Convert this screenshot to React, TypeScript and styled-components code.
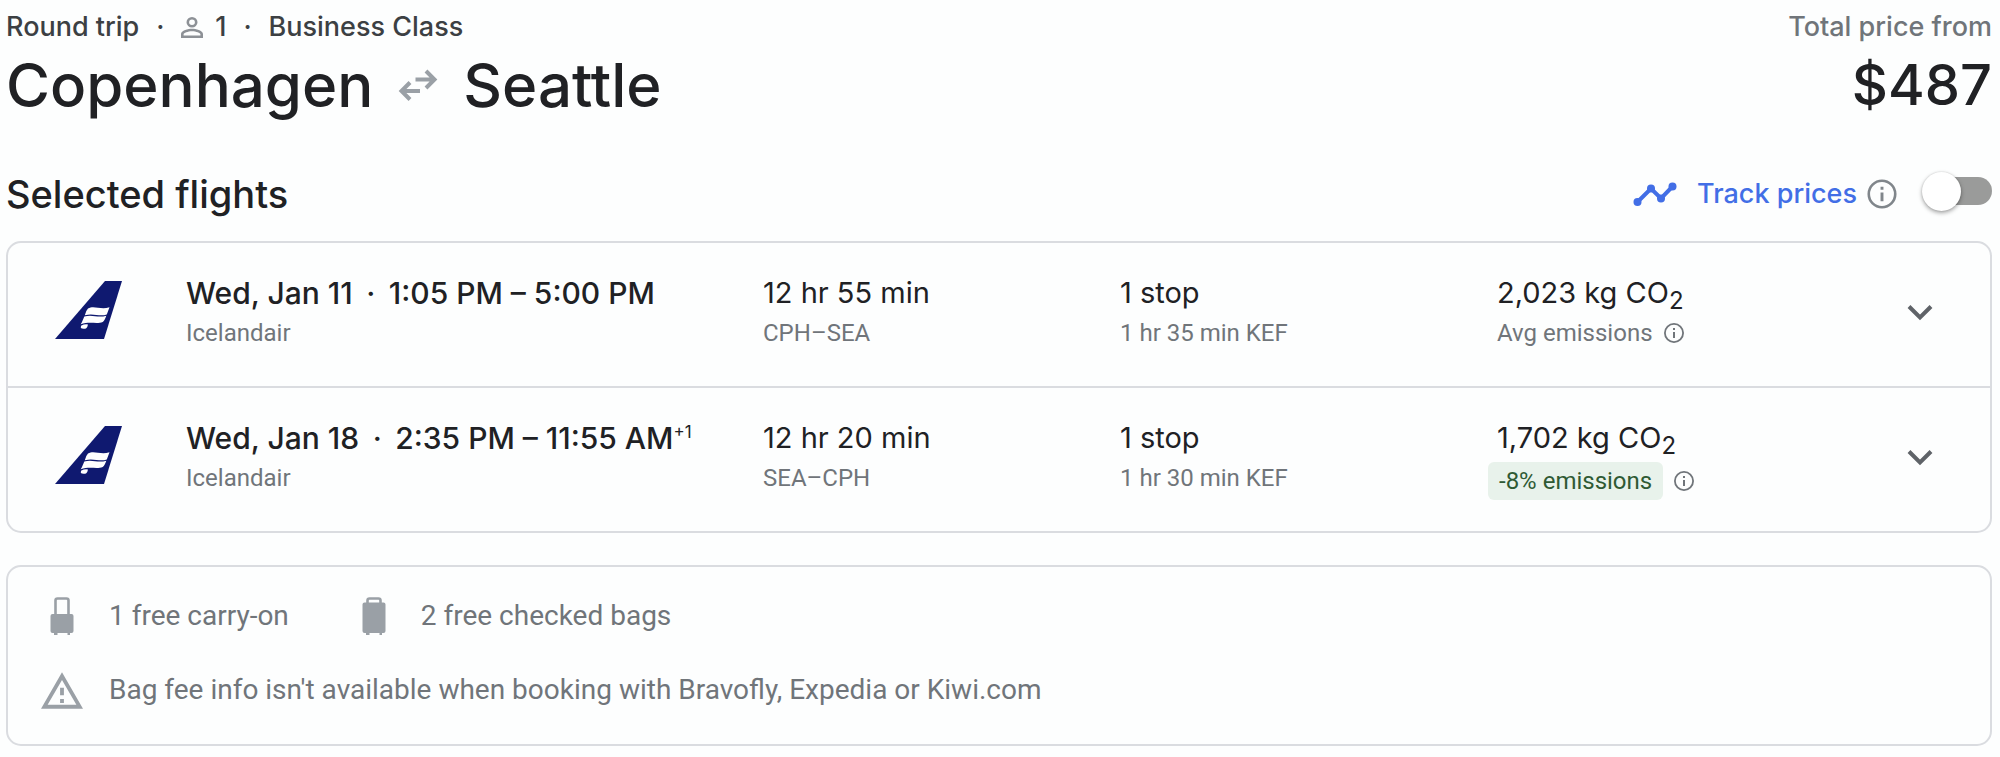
import React, { useState } from 'react';
import styled, { createGlobalStyle } from 'styled-components';

const display = '"Google Sans", Inter, "Liberation Sans", sans-serif';
const body = 'Roboto, "Liberation Sans", sans-serif';

const color = {
  ink: '#202124',
  strong: '#3c4043',
  muted: '#70757a',
  icon: '#9aa0a6',
  line: '#dadce0',
  link: '#426ee6',
  tail: '#0f1970',
};

const GlobalStyle = createGlobalStyle`
  * { box-sizing: border-box; }
  body { margin: 0; background: #fdfefe; color: ${color.ink}; font-family: ${body}; }
  h1, h2, p, ul { margin: 0; padding: 0; font-weight: inherit; }
  button { border: 0; padding: 0; background: none; font: inherit; color: inherit; cursor: pointer; }
`;

const Page = styled.main`
  padding: 11px 8px 8px 6px;
`;

const Header = styled.header`
  display: flex;
  justify-content: space-between;
`;

const HeaderColumn = styled.div<{ $end?: boolean }>`
  display: flex;
  flex-direction: column;
  align-items: ${(p) => (p.$end ? 'flex-end' : 'flex-start')};
  gap: 6px;
`;

const Meta = styled.p<{ $muted?: boolean }>`
  display: flex;
  align-items: center;
  font: 500 27px/32px ${display};
  color: ${(p) => (p.$muted ? color.muted : color.strong)};
`;

const Dot = styled.span`
  width: 36px;
  text-align: center;
`;

const MetaDot = styled(Dot)`
  width: 42px;
`;

const Travelers = styled.span`
  display: flex;
  align-items: center;
  gap: 12px;
`;

const Route = styled.h1`
  display: flex;
  align-items: center;
  gap: 25px;
  font: 500 60px/72px ${display};
`;

const Price = styled.p`
  font: 500 56px/72px ${display};
`;

const SectionBar = styled.div`
  display: flex;
  align-items: center;
  justify-content: space-between;
  margin: 49px 0 23px;
`;

const SectionTitle = styled.h2`
  font: 500 38px/48px ${display};
`;

const TrackGroup = styled.div`
  display: flex;
  align-items: center;
`;

const TrackLabel = styled.label`
  display: flex;
  align-items: center;
  gap: 20px;
  margin-right: 9px;
  font: 500 27px/32px ${display};
  color: ${color.link};
  cursor: pointer;
`;

const IconButton = styled.button`
  display: flex;
  align-items: center;
  justify-content: center;
`;

const Switch = styled.input`
  appearance: none;
  display: flex;
  align-items: center;
  width: 70px;
  height: 28px;
  margin: 0 0 6px 24px;
  border-radius: 14px;
  background: linear-gradient(#9a9b9a, #9a9b9a) right / 56px 28px no-repeat;
  cursor: pointer;

  &::before {
    content: '';
    width: 39px;
    height: 39px;
    flex: none;
    border-radius: 50%;
    background: #fff;
    box-shadow: 0 2px 4px rgba(0, 0, 0, 0.35), 0 0 2px rgba(0, 0, 0, 0.15);
  }

  &:checked {
    justify-content: flex-end;
  }
`;

const Card = styled.section`
  border: 2px solid ${color.line};
  border-radius: 15px;
`;

const FlightRow = styled.article`
  display: grid;
  grid-template-columns: 131px 577fr 357fr 377fr 410fr 26px;
  padding: 32px 57px 28px 47px;
  min-height: 143px;

  & + & {
    border-top: 2px solid ${color.line};
    min-height: 145px;
  }
`;

const TailCell = styled.div`
  padding-top: 6px;
`;

const Cell = styled.div`
  display: flex;
  flex-direction: column;
  gap: 6px;
  white-space: nowrap;
`;

const Primary = styled.p<{ $bold?: boolean }>`
  display: flex;
  font: ${(p) => (p.$bold ? '500 30px' : '400 29px')} / 36px ${display};
`;

const Superscript = styled.sup`
  font-size: 17px;
  line-height: 24px;
  font-weight: 400;
`;

const Subscript = styled.sub`
  font-size: 24px;
  line-height: 36px;
  padding-top: 8px;
  height: 36px;
`;

const Secondary = styled.p`
  display: flex;
  align-items: center;
  gap: 10px;
  font: 400 24px/32px ${body};
  color: ${color.muted};
`;

const Badge = styled.span`
  margin-left: -9px;
  padding: 0 11px;
  border-radius: 6px;
  background: #e8f2eb;
  color: #2f5a34;
  line-height: 38px;
`;

const ChevronCell = styled(IconButton)`
  align-self: start;
  height: 75px;
`;

const BagCard = styled(Card)`
  display: flex;
  flex-direction: column;
  gap: 34px;
  margin-top: 32px;
  padding: 29px 33px 34px;
`;

const BagLine = styled.ul`
  display: flex;
  gap: 64px;
  list-style: none;
`;

const BagItem = styled.li`
  display: flex;
  align-items: center;
  gap: 26px;
  font: 400 28px/40px ${body};
  color: ${color.muted};
`;

const Svg = styled.svg`
  display: block;
  flex: none;
`;

function PersonIcon() {
  return (
    <Svg width="22" height="21" viewBox="4 4 16 16" fill="#8d9196" preserveAspectRatio="none" aria-hidden>
      <path d="M12 5.9a2.1 2.1 0 1 1 0 4.2 2.1 2.1 0 0 1 0-4.2m0 9c2.97 0 6.1 1.46 6.1 2.1v1.1H5.9V17c0-.64 3.13-2.1 6.1-2.1M12 4a4 4 0 1 0 0 8 4 4 0 0 0 0-8zm0 9c-2.67 0-8 1.34-8 4v3h16v-3c0-2.66-5.33-4-8-4z" />
    </Svg>
  );
}

function RoundTripIcon() {
  return (
    <Svg width="40" height="32" viewBox="0 0 40 32" fill="none" stroke={color.icon} strokeWidth="4" aria-hidden>
      <path d="M17.500 10.500H36M28 2l8.500 8.500L28 19M22 22H4M12 13.500 3.500 22l8.500 8.500" />
    </Svg>
  );
}

function TrendIcon() {
  return (
    <Svg width="44" height="26" viewBox="0 0 44 26" aria-hidden>
      <path d="M4.500 21 18 7.500 28 17.500 39.500 5.500" fill="none" stroke={color.link} strokeWidth="4" />
      <g fill={color.link}>
        <circle cx="4.500" cy="21" r="4" />
        <circle cx="18" cy="7.500" r="4" />
        <circle cx="28" cy="17.500" r="4" />
        <circle cx="39.500" cy="5.500" r="4" />
      </g>
    </Svg>
  );
}

function InfoIcon({ size, tone }: { size: number; tone: string }) {
  return (
    <Svg width={size} height={size} viewBox="1 1 22 22" fill={tone} aria-hidden>
      <path d="M11 7h2v2h-2zm0 4h2v6h-2zm1-9a10 10 0 1 0 0 20 10 10 0 0 0 0-20zm0 18.200a8.200 8.200 0 1 1 0-16.400 8.200 8.200 0 0 1 0 16.400z" />
    </Svg>
  );
}

function ChevronIcon() {
  return (
    <Svg width="26" height="17" viewBox="0 0 26 17" fill="none" stroke="#5f6368" strokeWidth="4" aria-hidden>
      <path d="M2 2.500 13 13.500 24 2.500" />
    </Svg>
  );
}

function TailLogo() {
  return (
    <Svg width="67" height="58" viewBox="0 0 67 58" role="img" aria-label="Icelandair">
      <path d="M50 0H67L49 58H0z" fill={color.tail} />
      <path
        d="M33 27.500c6-3.500 12 1.500 21.500-1.200l-2.700 7.200c-7 2.500-13-1.500-22 .8q1-4.500 3.200-6.800zM29.300 35.500c8-2.500 13.500 1.800 22-.8-1 3-2 5-3.600 6.300-6 2.500-13-1-22 2.300 1.300-2 2.300-4.600 3.600-7.800zM26 44.700q3.500-1.800 7-1.200-.5 3-2 4-3.500.8-5.200-.5z"
        fill="#fff"
      />
    </Svg>
  );
}

function CarryOnIcon() {
  return (
    <Svg width="42" height="40" viewBox="0 0 42 40" aria-hidden>
      <path d="M14.500 19V4.500q0-2 2-2h9q2 0 2 2V19" fill="none" stroke={color.icon} strokeWidth="2.600" />
      <path d="M11.500 18h19q2 0 2 2v15q0 2-2 2h-1.500v2h-2.500v-2h-10v2H13v-2h-1.500q-2 0-2-2V20q0-2 2-2z" fill={color.icon} />
    </Svg>
  );
}

function CheckedBagIcon() {
  return (
    <Svg width="42" height="40" viewBox="0 0 42 40" aria-hidden>
      <path d="M14.500 8V4.500q0-2 2-2h9q2 0 2 2V8" fill="none" stroke={color.icon} strokeWidth="2.600" />
      <path d="M11.500 6.500h19q2 0 2 2V35q0 2-2 2h-1.500v2h-2.500v-2h-10v2H13v-2h-1.500q-2 0-2-2V8.500q0-2 2-2z" fill={color.icon} />
    </Svg>
  );
}

function WarningIcon() {
  return (
    <Svg width="42" height="37" viewBox="1 2 22 19" fill={color.icon} aria-hidden>
      <path d="M12 5.990 19.530 19H4.470L12 5.990M12 2 1 21h22L12 2zm1 14h-2v2h2v-2zm0-6h-2v4h2v-4z" />
    </Svg>
  );
}

type Flight = {
  date: string;
  time: string;
  nextDay?: string;
  duration: string;
  airports: string;
  layover: string;
  co2: string;
  emissions: string;
  lower?: boolean;
};

const flights: Flight[] = [
  {
    date: 'Wed, Jan 11',
    time: '1:05 PM – 5:00 PM',
    duration: '12 hr 55 min',
    airports: 'CPH–SEA',
    layover: '1 hr 35 min KEF',
    co2: '2,023 kg CO',
    emissions: 'Avg emissions',
  },
  {
    date: 'Wed, Jan 18',
    time: '2:35 PM – 11:55 AM',
    nextDay: '+1',
    duration: '12 hr 20 min',
    airports: 'SEA–CPH',
    layover: '1 hr 30 min KEF',
    co2: '1,702 kg CO',
    emissions: '-8% emissions',
    lower: true,
  },
];

function FlightItem({ flight }: { flight: Flight }) {
  return (
    <FlightRow>
      <TailCell>
        <TailLogo />
      </TailCell>
      <Cell>
        <Primary $bold>
          {flight.date}
          <Dot>·</Dot>
          {flight.time}
          {flight.nextDay && <Superscript>{flight.nextDay}</Superscript>}
        </Primary>
        <Secondary>Icelandair</Secondary>
      </Cell>
      <Cell>
        <Primary>{flight.duration}</Primary>
        <Secondary>{flight.airports}</Secondary>
      </Cell>
      <Cell>
        <Primary>1 stop</Primary>
        <Secondary>{flight.layover}</Secondary>
      </Cell>
      <Cell>
        <Primary>
          {flight.co2}
          <Subscript>2</Subscript>
        </Primary>
        <Secondary>
          {flight.lower ? <Badge>{flight.emissions}</Badge> : flight.emissions}
          <IconButton aria-label="About emissions">
            <InfoIcon size={22} tone="#70757a" />
          </IconButton>
        </Secondary>
      </Cell>
      <ChevronCell aria-label="Show flight details">
        <ChevronIcon />
      </ChevronCell>
    </FlightRow>
  );
}

export default function App() {
  const [tracking, setTracking] = useState(false);
  return (
    <Page>
      <GlobalStyle />
      <Header>
        <HeaderColumn>
          <Meta>
            Round trip
            <MetaDot>·</MetaDot>
            <Travelers>
              <PersonIcon />1
            </Travelers>
            <MetaDot>·</MetaDot>
            Business Class
          </Meta>
          <Route>
            Copenhagen
            <RoundTripIcon />
            Seattle
          </Route>
        </HeaderColumn>
        <HeaderColumn $end>
          <Meta $muted>Total price from</Meta>
          <Price>$487</Price>
        </HeaderColumn>
      </Header>

      <SectionBar>
        <SectionTitle>Selected flights</SectionTitle>
        <TrackGroup>
          <TrackLabel htmlFor="track-prices">
            <TrendIcon />
            Track prices
          </TrackLabel>
          <IconButton aria-label="About price tracking">
            <InfoIcon size={32} tone="#80868b" />
          </IconButton>
          <Switch
            id="track-prices"
            type="checkbox"
            role="switch"
            checked={tracking}
            onChange={(e) => setTracking(e.target.checked)}
          />
        </TrackGroup>
      </SectionBar>

      <Card>
        {flights.map((flight) => (
          <FlightItem key={flight.date} flight={flight} />
        ))}
      </Card>

      <BagCard>
        <BagLine>
          <BagItem>
            <CarryOnIcon />1 free carry-on
          </BagItem>
          <BagItem>
            <CheckedBagIcon />2 free checked bags
          </BagItem>
        </BagLine>
        <BagLine>
          <BagItem>
            <WarningIcon />
            Bag fee info isn't available when booking with Bravofly, Expedia or Kiwi.com
          </BagItem>
        </BagLine>
      </BagCard>
    </Page>
  );
}
